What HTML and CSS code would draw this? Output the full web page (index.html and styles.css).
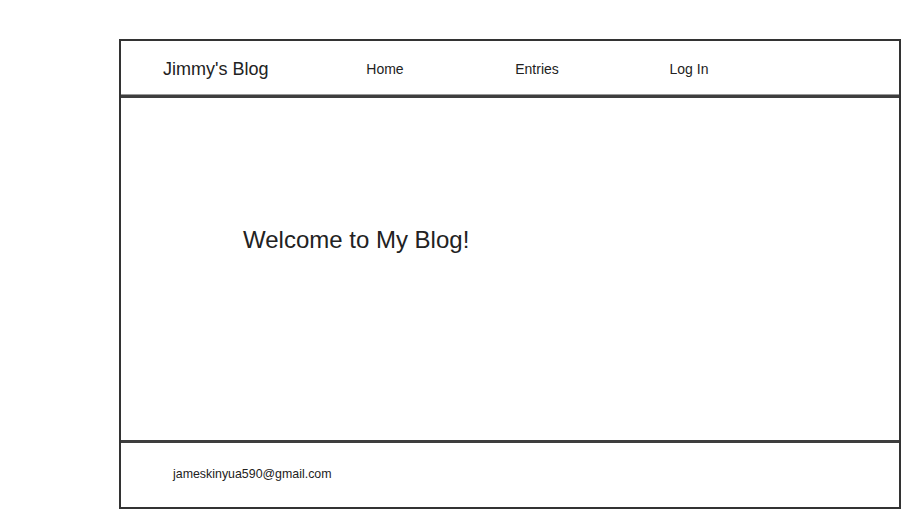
FILE: index.html
```html
<!DOCTYPE html>
<html>
<head>
<meta charset="utf-8">
<link rel="stylesheet" href="styles.css">
</head>
<body>
<div class="frame">
  <header class="header">
    <div class="logo">Jimmy's Blog</div>
    <nav class="nav">
      <a class="nav-item">Home</a>
      <a class="nav-item">Entries</a>
      <a class="nav-item">Log In</a>
    </nav>
  </header>
  <main class="main">
    <h1 class="welcome">Welcome to My Blog!</h1>
  </main>
  <footer class="footer">
    <span class="email">jameskinyua590@gmail.com</span>
  </footer>
</div>
</body>
</html>
```
FILE: styles.css
```css
html, body {
  margin: 0;
  padding: 0;
  background: #fff;
}
body {
  font-family: "Liberation Sans", Arial, sans-serif;
  color: #222;
}
.frame {
  box-sizing: border-box;
  margin: 39px 0 0 119px;
  width: 782px;
  height: 470px;
  border: 2px solid #333;
  display: flex;
  flex-direction: column;
}
.header {
  box-sizing: border-box;
  height: 57px;
  flex: none;
  display: flex;
  align-items: center;
  padding-left: 42px;
  border-bottom: 3px solid #3e3e3e;
  box-shadow: inset 0 -1px 0 #999;
}
.logo {
  width: 146px;
  font-size: 18px;
  padding-top: 2px;
}
.nav {
  display: flex;
  padding-top: 2px;
}
.nav-item {
  width: 152px;
  text-align: center;
  font-size: 14px;
  color: #222;
}
.main {
  flex: 1;
  box-sizing: border-box;
  padding: 128px 0 0 122px;
  border-bottom: 3px solid #3e3e3e;
}
.welcome {
  margin: 0;
  font-weight: normal;
  font-size: 24px;
  line-height: 28px;
}
.footer {
  height: 64px;
  flex: none;
  display: flex;
  align-items: center;
  padding-left: 52px;
}
.email {
  font-size: 12.4px;
  padding-bottom: 2px;
}
```
